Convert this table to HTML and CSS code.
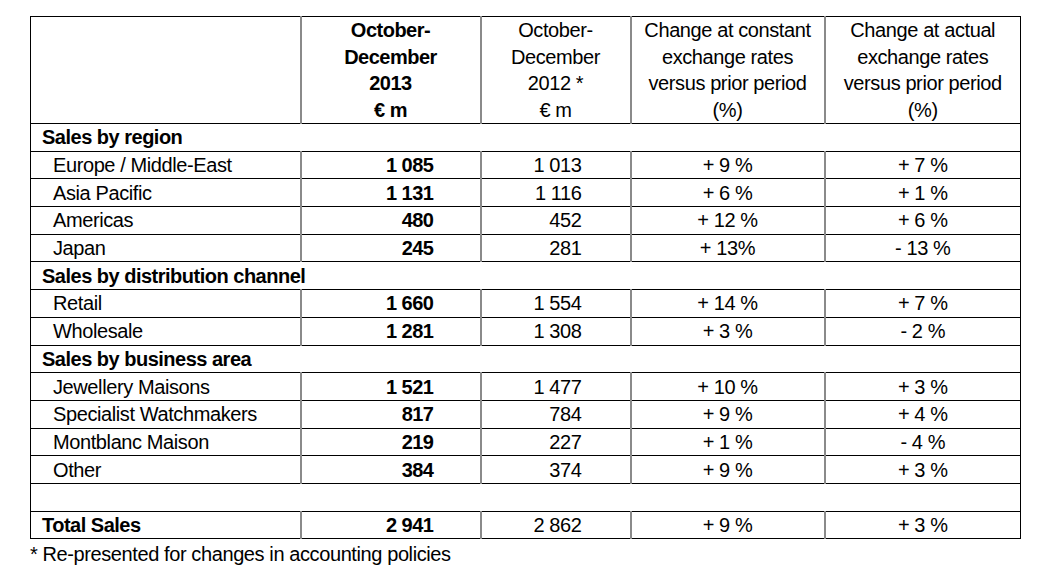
FILE: index.html
```html
<!DOCTYPE html>
<html lang="en">
<head>
<meta charset="utf-8">
<title>Sales</title>
<link rel="stylesheet" href="styles.css">
</head>
<body>
<div class="page">
<table class="sales">
  <colgroup>
    <col class="c1"><col class="c2"><col class="c3"><col class="c4"><col class="c5">
  </colgroup>
  <thead>
    <tr class="head">
      <th class="blank"></th>
      <th class="cur">October-<br>December<br>2013<br>€ m</th>
      <th>October-<br>December<br>2012 *<br>€ m</th>
      <th>Change at constant<br>exchange rates<br>versus prior period<br>(%)</th>
      <th>Change at actual<br>exchange rates<br>versus prior period<br>(%)</th>
    </tr>
  </thead>
  <tbody>
    <tr class="section"><td colspan="5">Sales by region</td></tr>
    <tr><td class="item">Europe / Middle-East</td><td class="num b">1 085</td><td class="num">1 013</td><td class="pct">+ 9 %</td><td class="pct">+ 7 %</td></tr>
    <tr><td class="item">Asia Pacific</td><td class="num b">1 131</td><td class="num">1 116</td><td class="pct">+ 6 %</td><td class="pct">+ 1 %</td></tr>
    <tr><td class="item">Americas</td><td class="num b">480</td><td class="num">452</td><td class="pct">+ 12 %</td><td class="pct">+ 6 %</td></tr>
    <tr><td class="item">Japan</td><td class="num b">245</td><td class="num">281</td><td class="pct">+ 13%</td><td class="pct">- 13 %</td></tr>
    <tr class="section"><td colspan="5">Sales by distribution channel</td></tr>
    <tr><td class="item">Retail</td><td class="num b">1 660</td><td class="num">1 554</td><td class="pct">+ 14 %</td><td class="pct">+ 7 %</td></tr>
    <tr><td class="item">Wholesale</td><td class="num b">1 281</td><td class="num">1 308</td><td class="pct">+ 3 %</td><td class="pct">- 2 %</td></tr>
    <tr class="section"><td colspan="5">Sales by business area</td></tr>
    <tr><td class="item">Jewellery Maisons</td><td class="num b">1 521</td><td class="num">1 477</td><td class="pct">+ 10 %</td><td class="pct">+ 3 %</td></tr>
    <tr><td class="item">Specialist Watchmakers</td><td class="num b">817</td><td class="num">784</td><td class="pct">+ 9 %</td><td class="pct">+ 4 %</td></tr>
    <tr><td class="item">Montblanc Maison</td><td class="num b">219</td><td class="num">227</td><td class="pct">+ 1 %</td><td class="pct">- 4 %</td></tr>
    <tr><td class="item">Other</td><td class="num b">384</td><td class="num">374</td><td class="pct">+ 9 %</td><td class="pct">+ 3 %</td></tr>
    <tr class="spacer"><td colspan="5"></td></tr>
    <tr class="total"><td class="label">Total Sales</td><td class="num b">2 941</td><td class="num">2 862</td><td class="pct">+ 9 %</td><td class="pct">+ 3 %</td></tr>
  </tbody>
</table>
<p class="note">* Re-presented for changes in accounting policies</p>
</div>
</body>
</html>
```

FILE: styles.css
```css
html, body {
  margin: 0;
  padding: 0;
  background: #ffffff;
}

body {
  font-family: "Liberation Sans", Arial, sans-serif;
  font-size: 20px;
  letter-spacing: -0.4px;
  color: #000000;
}

.page {
  padding: 16px 0 0 30px;
}

.sales {
  border-collapse: collapse;
  border: 1px solid #000000;
  table-layout: fixed;
  width: 990px;
}

.c1 { width: 270px; }
.c2 { width: 180px; }
.c3 { width: 150px; }
.c4 { width: 194px; }
.c5 { width: 196px; }

.sales th,
.sales td {
  padding: 0;
  border-top: 1px solid #000000;
  border-bottom: 1px solid #000000;
  vertical-align: middle;
}

.sales th + th,
.sales td + td {
  border-left: 2px solid #8a8a8a;
}

.head th {
  height: 106px;
  font-weight: normal;
  text-align: center;
  line-height: 26.5px;
}

.head th.cur {
  font-weight: bold;
  letter-spacing: -0.5px;
}

.sales tbody td {
  height: 26.7px;
  line-height: 22px;
}

.section td,
.total .label {
  font-weight: bold;
  letter-spacing: -0.5px;
  padding-left: 11px;
}

.item {
  padding-left: 22px !important;
}

.num {
  text-align: right;
}

td.num {
  padding-right: 48px !important;
}

td.num.b {
  font-weight: bold;
  letter-spacing: -0.5px;
  padding-right: 46px !important;
}

.pct {
  text-align: center;
}

.note {
  margin: 3px 0 0 0;
  line-height: 24px;
}
```
